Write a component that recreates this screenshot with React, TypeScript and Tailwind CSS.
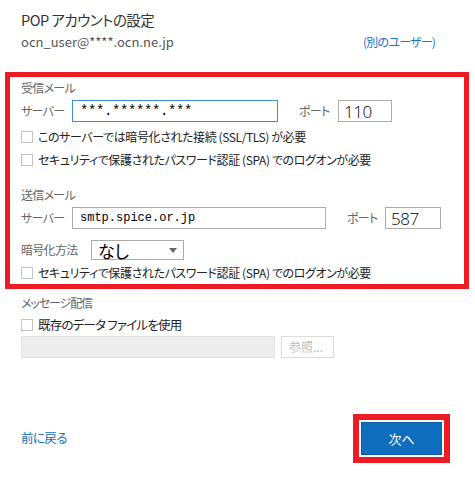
import React from "react";

function Checkbox({ label, className = "" }: { label: string; className?: string }) {
  return (
    <div className={`flex h-[22px] items-center ${className}`}>
      <span className="h-[12px] w-[12px] border border-[#c4c4c4] bg-white" />
      <span className="ml-[5px] text-[12px] tracking-[-0.4px] text-[#222]">{label}</span>
    </div>
  );
}

function Field({
  value,
  width,
  focused = false,
  mono = false,
  stars = false,
}: {
  value: string;
  width: string;
  focused?: boolean;
  mono?: boolean;
  stars?: boolean;
}) {
  return (
    <div
      className={`flex h-[22px] items-center border bg-white ${width} ${
        focused ? "border-[#3b8cd6]" : "border-[#ababab]"
      } ${mono ? "pl-[7px]" : "pl-[5px]"}`}
    >
      {mono ? (
        <span
          className={`font-['Liberation_Mono',monospace] text-black ${
            stars ? "text-[14px] tracking-[-0.4px]" : "text-[12px]"
          }`}
        >
          {value}
        </span>
      ) : (
        <span className="font-['Open_Sans',sans-serif] text-[17px] font-light leading-none text-black tracking-[-0.5px]">
          {value}
        </span>
      )}
    </div>
  );
}

const label = "text-[12px] tracking-[-0.7px] text-[#666]";

export default function App() {
  return (
    <div className="relative h-[492px] w-[475px] overflow-hidden bg-white font-['Noto_Sans_CJK_JP',sans-serif] [font-feature-settings:'palt']">
      {/* header */}
      <div className="pl-[21px] pr-[40px] pt-[10px]">
        <div className="flex h-[20px] items-center text-[14.5px] tracking-[-0.5px] text-[#333]">
          POP アカウントの設定
        </div>
        <div className="mt-[2px] flex h-[20px] items-center justify-between">
          <span className="text-[13px] text-[#555]">ocn_user@****.ocn.ne.jp</span>
          <span className="text-[12px] tracking-[-0.8px] text-[#1a73c8]">(別のユーザー)</span>
        </div>
      </div>

      {/* server settings */}
      <div className="ml-[5px] mt-[20px] w-[464px] border-[5px] border-[#ed1c24] pl-[11px]">
        <div className={`mt-[1px] flex h-[20px] items-center ${label}`}>受信メール</div>
        <div className="mt-[2px] flex h-[22px] items-center">
          <span className={`w-[51px] ${label}`}>サーバー</span>
          <Field value="***.******.***" width="w-[206px]" focused mono stars />
          <span className={`ml-[21px] w-[39px] ${label}`}>ポート</span>
          <Field value="110" width="w-[54px]" />
        </div>
        <Checkbox className="mt-[4px]" label="このサーバーでは暗号化された接続 (SSL/TLS) が必要" />
        <Checkbox className="mt-[1px]" label="セキュリティで保護されたパスワード認証 (SPA) でのログオンが必要" />

        <div className={`mt-[14px] flex h-[20px] items-center ${label}`}>送信メール</div>
        <div className="mt-[2px] flex h-[22px] items-center">
          <span className={`w-[51px] ${label}`}>サーバー</span>
          <Field value="smtp.spice.or.jp" width="w-[254px]" mono />
          <span className={`ml-[21px] w-[38px] ${label}`}>ポート</span>
          <Field value="587" width="w-[56px]" />
        </div>
        <div className="mt-[11px] flex h-[20px] items-center">
          <span className={`w-[70px] ${label}`}>暗号化方法</span>
          <div className="flex h-[20px] w-[93px] items-center justify-between border border-[#ababab] bg-white pl-[6px] pr-[6px]">
            <span className="text-[17px] leading-none text-black">なし</span>
            <svg width="8" height="5" viewBox="0 0 8 5">
              <path d="M0 0 L8 0 L4 5 Z" fill="#666" />
            </svg>
          </div>
        </div>
        <Checkbox className="mt-[2px]" label="セキュリティで保護されたパスワード認証 (SPA) でのログオンが必要" />
      </div>

      {/* delivery */}
      <div className="pl-[21px]">
        <div className={`mt-[4px] flex h-[20px] items-center ${label} tracking-[-1.1px]`}>メッセージ配信</div>
        <div className="mt-[1px] flex h-[22px] items-center">
          <span className="h-[12px] w-[12px] border border-[#c4c4c4] bg-white" />
          <span className="ml-[5px] text-[12.5px] tracking-[-0.8px] text-[#222]">既存のデータ ファイルを使用</span>
        </div>
        <div className="flex h-[22px] items-center">
          <div className="h-[22px] w-[254px] border border-[#e2e2e2] bg-[#ededed]" />
          <div className="ml-[6px] flex h-[22px] w-[53px] items-center border border-[#dcdcdc] bg-white pl-[7px] text-[12px] text-[#bdbdbd]">
            参照...
          </div>
        </div>
      </div>

      {/* footer */}
      <div className="mt-[56px] flex h-[49px] items-center justify-between pl-[21px] pr-[25px]">
        <span className="text-[12.5px] tracking-[-0.6px] text-[#106ebe]">前に戻る</span>
        <div className="border-[6px] border-[#ed1c24] bg-white p-[2px]">
          <div className="flex h-[33px] w-[81px] items-center justify-center border border-[#0a5aa3] bg-[#106ebe] text-[13px] text-white">
            次へ
          </div>
        </div>
      </div>
    </div>
  );
}
